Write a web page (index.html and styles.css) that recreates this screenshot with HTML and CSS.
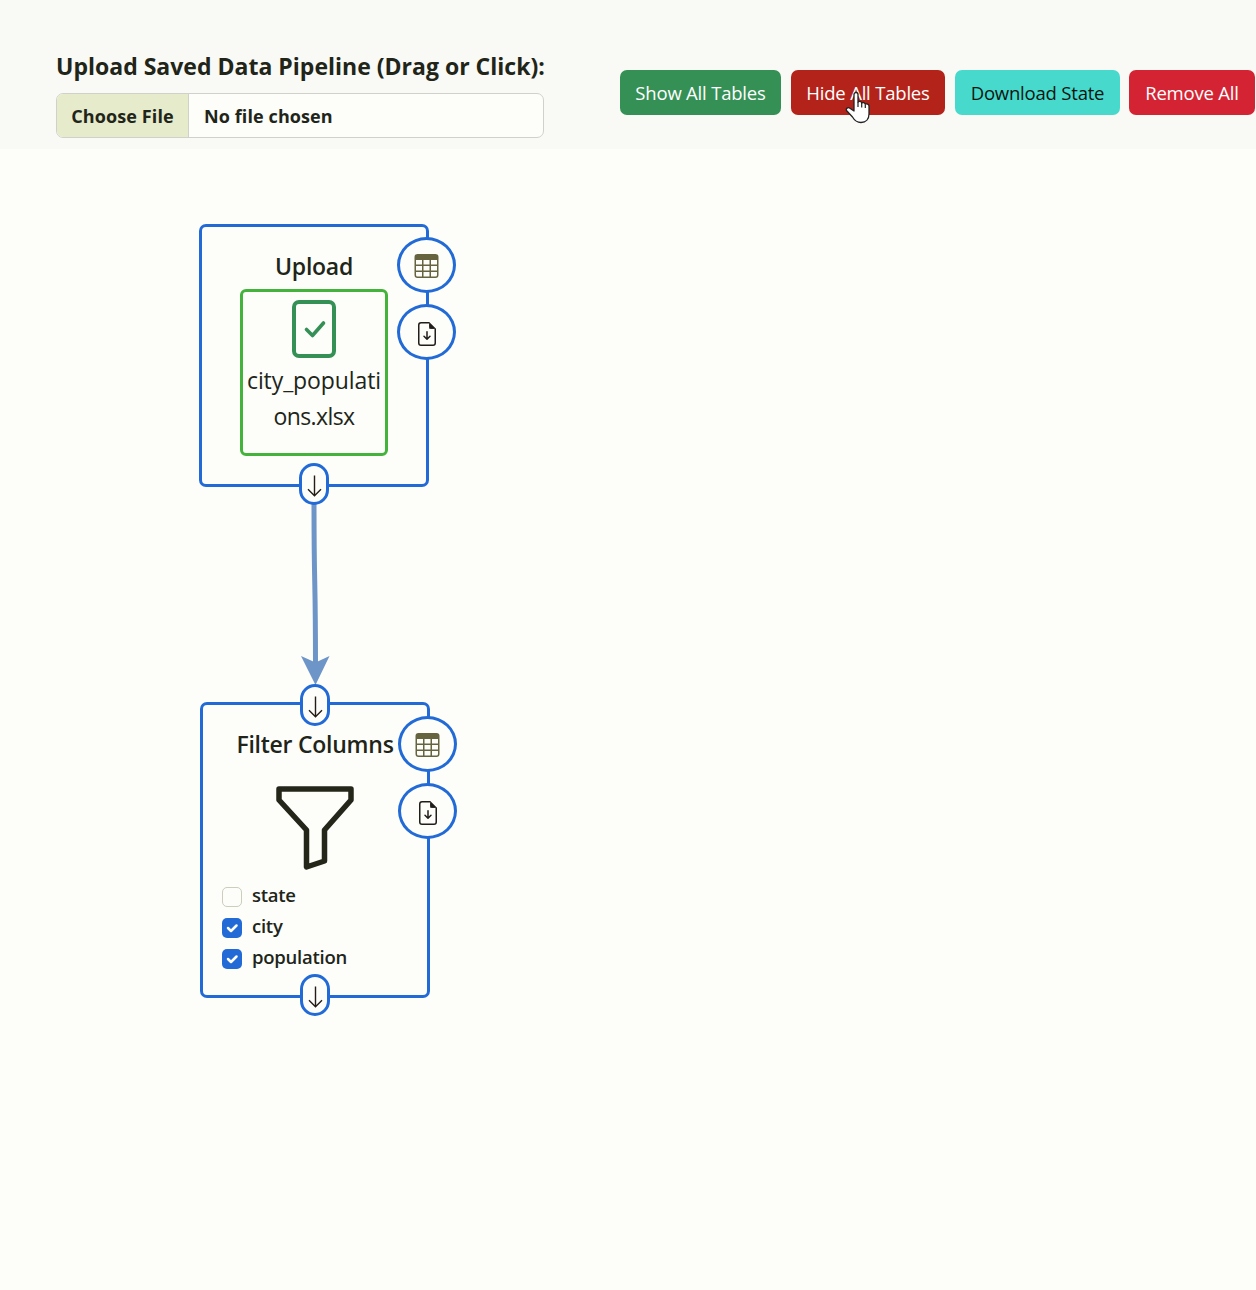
FILE: index.html
```html
<!DOCTYPE html>
<html lang="en">
<head>
<meta charset="utf-8">
<title>Data Pipeline</title>
<link rel="stylesheet" href="styles.css">
</head>
<body>
<svg class="defs" aria-hidden="true">
  <symbol id="i-table" viewBox="0 0 16 16"><path d="M0 2a2 2 0 0 1 2-2h12a2 2 0 0 1 2 2v12a2 2 0 0 1-2 2H2a2 2 0 0 1-2-2V2zm15 2h-4v3h4V4zm0 4h-4v3h4V8zm0 4h-4v3h3a1 1 0 0 0 1-1v-2zm-5 3v-3H6v3h4zm-5 0v-3H1v2a1 1 0 0 0 1 1h3zm-4-4h4V8H1v3zm0-4h4V4H1v3zm5-3v3h4V4H6zm4 4H6v3h4V8z"/></symbol>
  <symbol id="i-file" viewBox="0 0 16 16"><path d="M8.5 6.5a.5.5 0 0 0-1 0v3.793L6.354 9.146a.5.5 0 1 0-.708.708l2 2a.5.5 0 0 0 .708 0l2-2a.5.5 0 0 0-.708-.708L8.5 10.293V6.5z"/><path d="M14 14V4.5L9.500 0H4a2 2 0 0 0-2 2v12a2 2 0 0 0 2 2h8a2 2 0 0 0 2-2zM9.500 3A1.500 1.500 0 0 0 11 4.500h2V14a1 1 0 0 1-1 1H4a1 1 0 0 1-1-1V2a1 1 0 0 1 1-1h5.500v2z"/><path d="M9.500 1v3.500H13z"/></symbol>
  <symbol id="i-down" viewBox="0 0 16 22"><path d="M8.500 .5v20M2 14.200l6.500 6.500 6.500-6.500" fill="none" stroke="currentColor" stroke-width="1.400"/></symbol>
  <symbol id="i-check" viewBox="0 0 20 20"><path d="m6 10 3 3 5.500-5.500" fill="none" stroke="currentColor" stroke-width="2.500" stroke-linecap="round" stroke-linejoin="round"/></symbol>
</svg>

<header class="toolbar">
  <div class="upload">
    <label class="upload-label">Upload Saved Data Pipeline (Drag or Click):</label>
    <div class="file-input">
      <span class="file-button">Choose File</span>
      <span class="file-name">No file chosen</span>
    </div>
  </div>
  <div class="actions">
    <button class="btn btn-show">Show All Tables</button>
    <button class="btn btn-hide">Hide All Tables</button>
    <button class="btn btn-download">Download State</button>
    <button class="btn btn-remove">Remove All</button>
  </div>
</header>

<main class="canvas">
  <svg class="edge" width="40" height="190" viewBox="0 0 40 190">
    <path d="M19 0C19 95 20.500 70 20.500 165" fill="none" stroke="currentColor" stroke-width="5"/>
    <path d="m6 156 14.500 6.500L34.500 156 20.500 185z" fill="currentColor"/>
  </svg>

  <section class="node node-upload">
    <h2 class="node-title">Upload</h2>
    <div class="dropzone">
      <svg class="file-ok" viewBox="0 0 44 58"><rect x="2" y="2" width="40" height="54" rx="5" fill="none" stroke="currentColor" stroke-width="4"/><path d="m14.500 29.500 6 6L31.500 23" fill="none" stroke="currentColor" stroke-width="3.600" stroke-linecap="round" stroke-linejoin="round"/></svg>
      <p class="dropzone-name">city_populati<br><span class="dropzone-rest">ons.xlsx</span></p>
    </div>
    <div class="node-tools">
      <span class="tool"><svg class="ico-table"><use href="#i-table"/></svg></span>
      <span class="tool"><svg class="ico-file"><use href="#i-file"/></svg></span>
    </div>
    <span class="port port-out"><svg><use href="#i-down"/></svg></span>
  </section>

  <section class="node node-filter">
    <h2 class="node-title">Filter Columns</h2>
    <svg class="funnel" viewBox="0 0 78 84"><path d="M3 3h72v11L48.500 44v31L30.500 81V44L3 14z" fill="none" stroke="currentColor" stroke-width="5.500" stroke-linejoin="round"/></svg>
    <ul class="columns">
      <li><span class="box"></span>state</li>
      <li><span class="box box-on"><svg><use href="#i-check"/></svg></span>city</li>
      <li><span class="box box-on"><svg><use href="#i-check"/></svg></span>population</li>
    </ul>
    <div class="node-tools">
      <span class="tool"><svg class="ico-table"><use href="#i-table"/></svg></span>
      <span class="tool"><svg class="ico-file"><use href="#i-file"/></svg></span>
    </div>
    <span class="port port-in"><svg><use href="#i-down"/></svg></span>
    <span class="port port-out"><svg><use href="#i-down"/></svg></span>
  </section>
</main>

<svg class="cursor" width="26" height="33" viewBox="0 0 26 33"><path d="M9 17V3.500a2 2 0 0 1 4 0V11c1-1 3.300-.7 3.700 1 1.200-1 3.200-.5 3.600 1.200 1.500-.8 3.700 0 3.700 2V23c0 5-3 8.500-8 8.500-4.500 0-6.500-2-8.500-5.500L1.500 19.500c-1-2 1.500-3.500 3-2.500L9 20z" fill="#fff" stroke="#222" stroke-width="1.300" stroke-linejoin="round"/><path d="M13 11v5M16.700 12v4.500M20.300 13.500V17" stroke="#222" stroke-width="1.200"/></svg>
</body>
</html>
```
FILE: styles.css
```css
* { box-sizing: border-box; }

body {
  margin: 0;
  width: 1256px;
  height: 1290px;
  overflow: hidden;
  background: #fdfdfa;
  color: #212519;
  font-family: "Open Sans", "Noto Sans", sans-serif;
  font-size: 19px;
}

.defs { position: absolute; width: 0; height: 0; }

.toolbar {
  display: flex;
  align-items: flex-start;
  justify-content: space-between;
  height: 149px;
  padding: 49px 1px 0 56px;
  background: #f9f9f5;
}

.upload { width: 488px; }

.upload-label {
  display: block;
  height: 44px;
  line-height: 35px;
  font-size: 23px;
  font-weight: 680;
  letter-spacing: 0.01px;
  white-space: nowrap;
}

.file-input {
  display: flex;
  height: 45px;
  border: 1px solid #cfd2cb;
  border-radius: 7px;
  background: #fdfdfa;
  overflow: hidden;
  line-height: 45px;
  font-size: 18px;
  font-weight: 680;
  letter-spacing: 0.1px;
  white-space: nowrap;
}

.file-button {
  width: 132px;
  border-right: 1px solid #cfd2cb;
  background: #e6ebcb;
  text-align: center;
}

.file-name { padding-left: 15px; }

.actions { display: flex; gap: 10px; padding-top: 21px; }

.btn {
  height: 45px;
  padding: 1px 0 0;
  border: 0;
  border-radius: 7px;
  color: #fff;
  font: 400 18.500px/44px "Open Sans", "Noto Sans", sans-serif;
  letter-spacing: -0.2px;
  white-space: nowrap;
}

.btn-show { width: 161px; background: #349055; }
.btn-hide { width: 154px; background: #b4231a; }
.btn-download { width: 165px; background: #48d9cd; color: #08150f; }
.btn-remove { width: 126px; margin-left: -1px; background: #d42433; }

.canvas { position: relative; height: 1141px; }

.edge { position: absolute; left: 295px; top: 351px; color: #6d95c8; }

.node {
  position: absolute;
  display: flex;
  flex-direction: column;
  align-items: center;
  border: 3px solid #226bd6;
  border-radius: 7px;
}

.node-upload { left: 199px; top: 75px; width: 230px; height: 263px; padding-top: 22px; }
.node-filter { left: 200px; top: 553px; width: 230px; height: 296px; padding-top: 22px; }

.node-title {
  margin: 0;
  height: 40px;
  line-height: 34px;
  font-size: 23px;
  font-weight: 560;
  letter-spacing: -0.25px;
  white-space: nowrap;
}

.dropzone {
  display: flex;
  flex-direction: column;
  align-items: center;
  width: 148px;
  height: 167px;
  padding-top: 8px;
  border: 3px solid #43b33c;
  border-radius: 6px;
}

.file-ok { width: 44px; height: 58px; color: #349055; }

.dropzone-name {
  margin: 4px 0 0;
  font-size: 23px;
  line-height: 36px;
  letter-spacing: -0.1px;
  text-align: center;
  white-space: nowrap;
}

.dropzone-rest { letter-spacing: -0.6px; }

.node-tools {
  position: absolute;
  top: 10px;
  right: -30px;
  display: flex;
  flex-direction: column;
  gap: 11px;
}

.node-filter .node-tools { top: 11px; }

.tool {
  display: flex;
  align-items: center;
  justify-content: center;
  width: 59px;
  height: 56px;
  border: 3px solid #226bd6;
  border-radius: 50%;
  background: #fdfdfa;
}

.ico-table { width: 25px; height: 24px; margin-top: 2px; fill: #66643e; }
.ico-file { width: 24px; height: 24px; margin-top: 3px; fill: #211d1b; }

.port {
  position: absolute;
  left: 50%;
  display: flex;
  align-items: center;
  justify-content: center;
  width: 30px;
  height: 42px;
  margin-left: -15px;
  border: 3px solid #226bd6;
  border-radius: 15px;
  background: #fdfdfa;
}

.port svg { width: 16px; height: 22px; margin-top: 3px; color: #241d16; }
.port-out { bottom: -21px; }
.port-in { top: -21px; }

.funnel { width: 78px; height: 84px; margin-top: 19px; color: #24261a; }

.columns {
  align-self: stretch;
  margin: 11px 0 0;
  padding: 0 0 0 19px;
  list-style: none;
  font-size: 18.500px;
  font-weight: 560;
  letter-spacing: -0.25px;
}

.columns li { display: flex; align-items: flex-start; gap: 10px; height: 31px; line-height: 28px; }

.box {
  width: 20px;
  height: 20px;
  margin-top: 6px;
  border: 1px solid #cccdbb;
  border-radius: 5px;
}

.box-on { border: 0; background: #226bd6; color: #fff; }
.box-on svg { display: block; width: 20px; height: 20px; }

.cursor { position: absolute; left: 845px; top: 91px; }
```
